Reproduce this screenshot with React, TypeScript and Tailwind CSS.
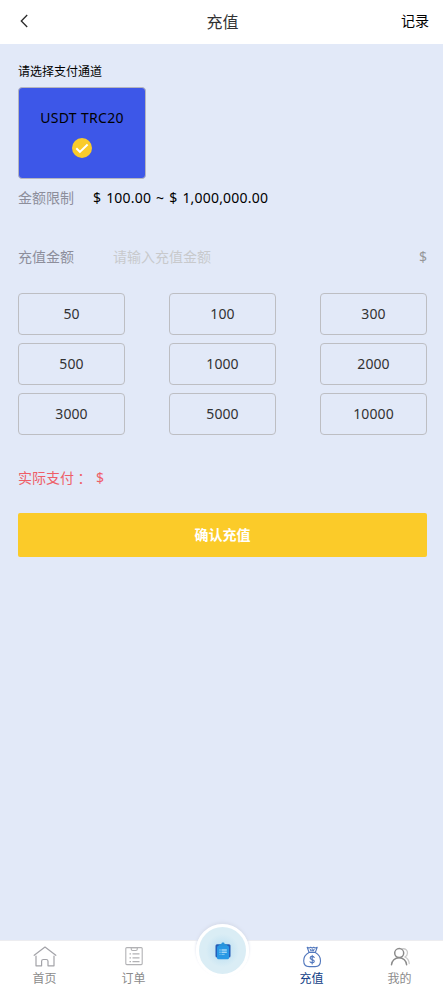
import type { ReactNode } from "react";

const amounts = ["50", "100", "300", "500", "1000", "2000", "3000", "5000", "10000"];

function HomeIcon() {
  return (
    <svg width="24" height="24" viewBox="0 0 24 24" fill="none" stroke="#a3a3a8" strokeWidth="1.2" strokeLinecap="round" strokeLinejoin="round">
      <path d="M1.2 10.3 12 2l10.8 8.3M3 11V20.8h5.6v-4.5c0-1.1.8-1.8 1.8-1.8h2.8c1 0 1.8.7 1.8 1.8v4.5h6V11" />
    </svg>
  );
}

function OrderIcon() {
  return (
    <svg width="24" height="24" viewBox="0 0 24 24" fill="none" stroke="#b2b2b5" strokeWidth="1.1" strokeLinejoin="round">
      <rect x="3.8" y="2.6" width="16.4" height="17" rx="1" />
      <path d="M9.2 2.8V4c0 1 .7 1.5 1.5 1.5h3.1c.8 0 1.5-.5 1.5-1.5V2.8z" />
      <path d="M7.5 8.8H9m1.5 0h7M7.5 12.8H9m1.5 0h7M7.5 16.6H9m1.5 0h7" strokeWidth="1.2" />
    </svg>
  );
}

function MoneyBagIcon() {
  return (
    <svg width="24" height="24" viewBox="0 0 24 24" fill="none" stroke="#5278bd" strokeWidth="1.1" strokeLinecap="round" strokeLinejoin="round">
      <path d="m7.2 2.2 1.8 5h6.4l1.8-5-2 .8-1.5-.8-1.5.8-1.5-.8-1.5.8zM10.3 4.4l.7 1.3M12.2 4.2v1.5M14.1 4.4l-.8 1.3" />
      <path d="M9 7.5c-3 1.6-5.3 4.5-5.3 8.2 0 3.7 2.4 5.9 5.6 5.9h5.8c3.2 0 5.4-2.2 5.4-5.9 0-3.7-2.2-6.6-5.2-8.2z" />
      <path d="M14.2 12.4c-.4-.7-1.1-1-2-1-1.2 0-2.1.6-2.1 1.6 0 2.2 4.2 1 4.2 3.3 0 1-.9 1.6-2.1 1.6-1 0-1.8-.4-2.2-1.1M12.2 10.4v8.5" />
    </svg>
  );
}

function UsersIcon() {
  return (
    <svg width="24" height="24" viewBox="0 0 24 24" fill="none" strokeLinecap="round">
      <path d="M14 3.9c3.6-.7 5.7 1.4 5.5 4.1-.1 1.9-1.1 3.2-2.5 4 2.6 1.3 4 3.6 4.2 6.5" stroke="#c9c9c9" strokeWidth="1.3" />
      <circle cx="11.2" cy="8.1" r="4.5" stroke="#8b8b8b" strokeWidth="1.5" />
      <path d="M3.5 19.7c.3-4 3.4-7 7.6-7s7.2 3 7.5 7" stroke="#8b8b8b" strokeWidth="1.5" />
    </svg>
  );
}

function ClipboardIcon() {
  return (
    <svg width="16" height="18" viewBox="0 0 16 18">
      <rect x="0.5" y="2.3" width="15" height="13.3" rx="1.5" fill="#245db8" />
      <rect x="2" y="3.8" width="12" height="13.5" rx="1.5" fill="#2898e5" />
      <path d="M3.5 4.2C3.8 2.6 4.6 2 5.3 1.9h1.1C6.5 1 7.1.5 8 .5s1.5.5 1.6 1.4h1.1c.7.1 1.5.7 1.8 2.3z" fill="#2993da" />
      <path d="M4.5 8h1M6.5 8h5.3M4.5 10.2h1M6.5 10.2h5.3" stroke="#dbf4ff" strokeWidth="1" />
      <path d="M4.5 12.4h1M6.5 12.4h3.1" stroke="#83caef" strokeWidth="1" />
    </svg>
  );
}

function NavItem({ label, children, active = false }: { label: string; children: ReactNode; active?: boolean }) {
  return (
    <button className={`flex flex-col items-center pt-[4px] text-xs leading-[18px] ${active ? "text-[#103e86]" : "text-[#8b8b8b]"}`}>
      {children}
      <span className="mt-px">{label}</span>
    </button>
  );
}

export default function App() {
  return (
    <div className="flex h-[989px] w-full flex-col bg-[#e2e9f8] font-['Noto_Sans','Noto_Sans_CJK_SC',sans-serif] text-sm text-black">
      <header className="grid h-11 shrink-0 grid-cols-[1fr_auto_1fr] items-center bg-white pr-[14px] pl-4">
        <button aria-label="返回" className="ml-0.5 w-fit">
          <svg className="-mt-0.5" width="12" height="14" viewBox="0 0 12 14" fill="none" stroke="#292929" strokeWidth="1.3">
            <path d="M9.2 1 3.3 7l5.9 6" />
          </svg>
        </button>
        <h1 className="-mt-px text-center text-base leading-[22px] text-[#323233]">充值</h1>
        <button className="-mt-0.5 justify-self-end leading-5">记录</button>
      </header>

      <main className="flex-1 pt-[19px] pr-4 pl-[18px]">
        <h2 className="h-6 text-xs leading-[18px]">请选择支付通道</h2>
        <button className="flex h-[92px] w-32 flex-col items-center rounded border border-[#b5b5be] bg-[#3d57e8] pt-5">
          <span className="leading-5 tracking-[0.3px]">USDT TRC20</span>
          <svg className="mt-[10px]" width="20" height="20" viewBox="0 0 20 20">
            <circle cx="10" cy="10" r="10" fill="#facb2b" />
            <path d="m4.3 10.2 3.6 3.7 7.7-7.4" fill="none" stroke="white" strokeWidth="2" />
          </svg>
        </button>

        <div className="flex h-[38px] items-center leading-5">
          <span className="w-[75px] text-[#8d8e9b]">金额限制</span>
          <span className="tracking-[0.2px] [word-spacing:1.1px]">$ 100.00 ~ $ 1,000,000.00</span>
        </div>

        <div className="mt-[28px] flex h-6 items-center leading-5 text-[#8d8e9b]">
          <label htmlFor="amount" className="w-[95px]">充值金额</label>
          <input id="amount" placeholder="请输入充值金额" className="mb-0.5 h-[22px] min-w-0 flex-1 outline-none placeholder:text-[#c8c9cc] placeholder:opacity-100" />
          <span className="text-[#969799]">$</span>
        </div>

        <div className="mt-6 grid grid-cols-[107px_107px_107px] justify-between gap-y-2">
          {amounts.map((amount) => (
            <button key={amount} className="h-[42px] rounded border border-[#bdbec3] leading-5 tracking-[0.1px] text-[#323233]">
              {amount}
            </button>
          ))}
        </div>

        <div className="mt-[33px] flex h-5 items-center leading-5 text-[#ee5e68]">
          <span>实际支付</span>
          <span className="w-[22px] font-['Noto_Sans_CJK_TC',sans-serif]" lang="zh-TW">：</span>
          <span>$</span>
        </div>
        <button className="mt-[25px] h-11 w-full rounded-xs bg-[#fbcb29] font-bold text-white">确认充值</button>
      </main>

      <nav className="grid h-[49px] shrink-0 grid-cols-[89px_89px_89px_89px_87px] border-t border-[#ededf0] bg-white">
        <NavItem label="首页"><HomeIcon /></NavItem>
        <NavItem label="订单"><OrderIcon /></NavItem>
        <button aria-label="任务" className="-mt-[17px] flex size-[53px] items-center justify-center justify-self-center rounded-full border-[3px] border-white bg-[radial-gradient(circle,#a8d5f0_0%,#c8e5f3_25%,#daedf5_50%)] shadow-[0_-2px_3px_#d8deec]">
          <ClipboardIcon />
        </button>
        <NavItem label="充值" active><MoneyBagIcon /></NavItem>
        <NavItem label="我的"><UsersIcon /></NavItem>
      </nav>
    </div>
  );
}
